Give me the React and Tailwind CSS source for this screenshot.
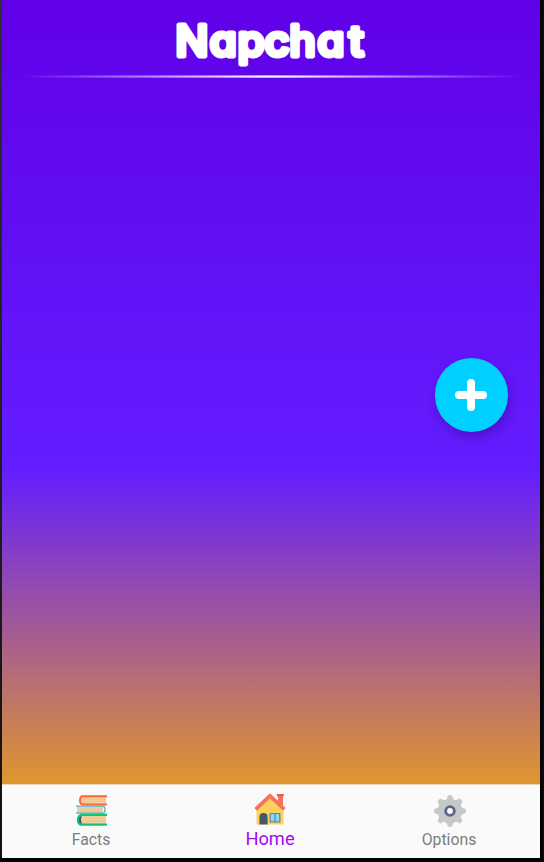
import React from "react";

function Title() {
  return (
    <h1 className="h-[75px] w-full">
      <svg width="538" height="75" viewBox="0 0 538 75" className="block">
        <text
          transform="scale(1.03 1)"
          x="168.4 201.6 228.8 254.8 279.2 306.4 337"
          y="55.7"
          fill="#fff"
          stroke="#fff"
          strokeWidth="4.8"
          strokeLinejoin="round"
          strokeLinecap="round"
          className="text-[42px] font-medium font-[Inter,sans-serif] [font-feature-settings:'cv11']"
        >
          Napchat
        </text>
      </svg>
    </h1>
  );
}

function BooksIcon() {
  return (
    <svg width="32" height="32" viewBox="0 0 32 32">
      <path d="M5 2H30v7H5z" fill="#efcf9c" />
      <path d="M5 4.5H30M5 6.5H30" stroke="#e2c08b" strokeWidth=".5" />
      <path d="M31 1.2H6.5Q4 1.2 4 5.3t2.5 4.2H31" fill="none" stroke="#ff6536" strokeWidth="2" />
      <path d="M1 11.5H27v6.5H1z" fill="#efcf9c" />
      <path d="M1 14.2H26M1 16.2H26" stroke="#e2c08b" strokeWidth=".5" />
      <path d="M0 11.2H27Q29 11.5 29 14.7T27 18.2H0" fill="none" stroke="#48b2cf" strokeWidth="1.2" />
      <path d="M4 20H30v9H4z" fill="#efcf9c" />
      <path d="M4 23.3H30M4 26H30" stroke="#e2c08b" strokeWidth=".5" />
      <path d="M3 20h3q-2 4.5 0 9H3z" fill="#3d5362" />
      <path d="M31 19.8H6Q2 20 2 24.9T6 29.7H31" fill="none" stroke="#12c27b" strokeWidth="2.2" />
    </svg>
  );
}

function HouseIcon() {
  return (
    <svg width="32" height="32" viewBox="0 0 32 32">
      <path d="M24 2h5v12h-5z" fill="#f4735d" />
      <path d="M22.8 1h7v2.4h-7z" fill="#e7604c" />
      <path d="M2.5 14 16 2l13.5 12v17.5h-27z" fill="#ffd15c" />
      <path d="M.3 15 16 .3 31.7 15l-2.5 2.7L16 5.6 2.8 17.7z" fill="#f4735d" />
      <path d="M5.4 31.5V24a4.1 4.1 0 0 1 8.2 0v7.5z" fill="#415a6b" />
      <path d="M15.6 20.2h10.8v9.2H15.6z" fill="#4a7288" />
      <path d="M16.6 21.1h3.9v7.4h-3.9zM21.5 21.1h3.9v7.4h-3.9z" fill="#84dbff" />
    </svg>
  );
}

function GearIcon() {
  return (
    <svg width="32" height="32" viewBox="-16 -16 32 32">
      <g fill="#c5c9c7">
        <circle r="12" />
        {[0, 45, 90, 135, 180, 225, 270, 315].map((angle) => (
          <path key={angle} transform={`rotate(${angle})`} d="M-5-10.5Q-2.6-12-2.2-15q.1-.8.8-.8h2.8q.7 0 .8.8.4 3 2.8 4.5z" />
        ))}
      </g>
      <circle r="4.3" fill="#fff" stroke="#596689" strokeWidth="2.8" />
    </svg>
  );
}

function Tab({ icon, label, active }) {
  return (
    <button className="flex flex-1 flex-col items-center pt-[10px]">
      <span className={active ? "-mt-[2px] mr-[2px] block h-8" : "block h-8"}>{icon}</span>
      <span
        className={
          active
            ? "mt-[3px] mr-px text-[18.3px] leading-[21px] text-[#a30af2]"
            : "mt-[3px] mr-px text-[15.8px] leading-[20px] text-[#7c7c7c]"
        }
      >
        {label}
      </span>
    </button>
  );
}

export default function App() {
  return (
    <div className="flex h-[862px] w-[544px] flex-col overflow-hidden border-b-[4px] border-black bg-linear-to-b from-[#303030] to-[#111] font-[Roboto,sans-serif]">
      <div className="flex min-h-0 flex-1">
        <main className="ml-[2px] flex w-[538px] flex-col">
          <section className="flex h-[784px] flex-col bg-[linear-gradient(to_bottom,#6000e8_0px,#641dff_470px,#e0962e_784px)]">
            <Title />
            <div className="mx-[18px] h-[3px] bg-[linear-gradient(to_bottom,#ffffff60,#ffffff_50%,#ffffff80)] [mask-image:linear-gradient(to_right,transparent,#000,transparent)]" />
            <div className="flex flex-1 items-start justify-end pt-[280px] pr-[32px]">
              <button
                aria-label="Add"
                className="flex h-[73.5px] w-[73.5px] items-center justify-center rounded-full bg-[#00d0ff] shadow-[2px_5px_12px_rgba(30,0,100,0.35)]"
              >
                <svg width="32" height="32" viewBox="0 0 32 32">
                  <path d="M4 16h24M16 4v24" stroke="#fff" strokeWidth="8" strokeLinecap="round" />
                </svg>
              </button>
            </div>
          </section>
          <nav className="flex h-[74px] border-t border-[#e8d5c0] bg-[#fafafa] pr-px">
            <Tab icon={<BooksIcon />} label="Facts" />
            <Tab icon={<HouseIcon />} label="Home" active />
            <Tab icon={<GearIcon />} label="Options" />
          </nav>
        </main>
        <div className="flex-1 border-l-2 border-black bg-[#0c0c0c]" />
      </div>
    </div>
  );
}
